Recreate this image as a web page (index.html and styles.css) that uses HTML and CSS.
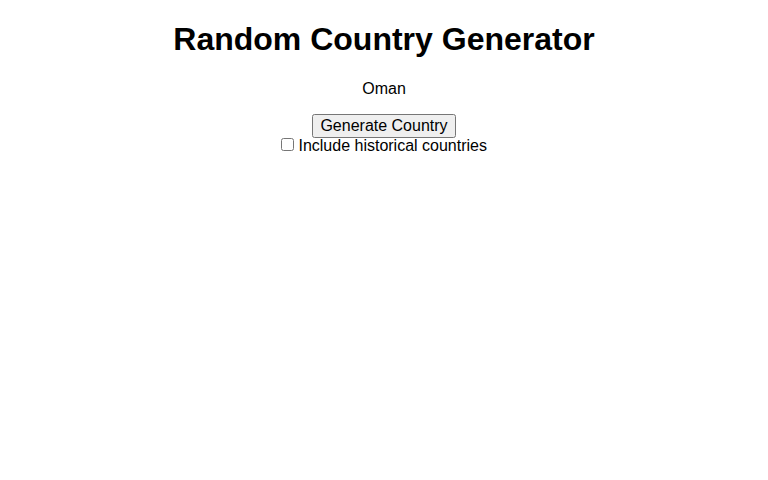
FILE: index.html
```html
<!DOCTYPE html>
<html lang="en">
<head>
    <meta charset="UTF-8">
    <meta name="viewport" content="width=device-width, initial-scale=1.0">
    <link rel="stylesheet" href="styles.css">
    <title>Random Country Generator</title>
</head>
<body>
    <h1>Random Country Generator</h1>
    <p id="country">Oman</p>
    <button type="button" class="generate">Generate Country</button>
    <div class="option">
        <input type="checkbox" id="historical">
        <label for="historical">Include historical countries</label>
    </div>
</body>
</html>
```

FILE: styles.css
```css
body {
    margin: 0;
    font-family: 'Liberation Sans', Arial, sans-serif;
    text-align: center;
}

.generate {
    display: block;
    margin: 0 auto;
    font-family: 'Liberation Sans', Arial, sans-serif;
    font-size: 16px;
}

.option {
    line-height: 1;
}

.option input {
    margin: 0;
}
```
